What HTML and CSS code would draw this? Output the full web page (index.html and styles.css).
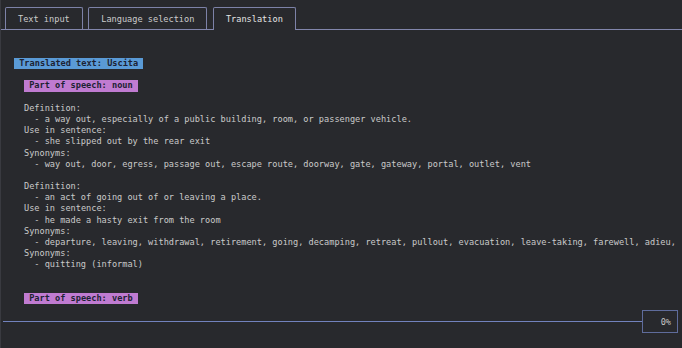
FILE: index.html
```html
<!DOCTYPE html>
<html>
<head>
<meta charset="utf-8">
<link rel="stylesheet" href="styles.css">
</head>
<body>
<div class="app">
  <div class="tabs">
    <div class="tab">Text input</div>
    <div class="tab">Language selection</div>
    <div class="tab active">Translation</div>
  </div>
  <div class="content">
    <div class="row"><span class="badge blue">Translated text: Uscita</span></div>
    <div class="row"></div>
    <div class="pos">
      <div class="row"><span class="badge purple">Part of speech: noun</span></div>
      <div class="row"></div>
      <div class="row">Definition:</div>
      <div class="row item">- a way out, especially of a public building, room, or passenger vehicle.</div>
      <div class="row">Use in sentence:</div>
      <div class="row item">- she slipped out by the rear exit</div>
      <div class="row">Synonyms:</div>
      <div class="row item">- way out, door, egress, passage out, escape route, doorway, gate, gateway, portal, outlet, vent</div>
      <div class="row"></div>
      <div class="row">Definition:</div>
      <div class="row item">- an act of going out of or leaving a place.</div>
      <div class="row">Use in sentence:</div>
      <div class="row item">- he made a hasty exit from the room</div>
      <div class="row">Synonyms:</div>
      <div class="row item">- departure, leaving, withdrawal, retirement, going, decamping, retreat, pullout, evacuation, leave-taking, farewell, adieu,</div>
      <div class="row">Synonyms:</div>
      <div class="row item">- quitting (informal)</div>
      <div class="row"></div>
      <div class="row"></div>
      <div class="row"><span class="badge purple">Part of speech: verb</span></div>
    </div>
  </div>
  <div class="footer">
    <div class="bar"></div>
    <div class="pct">0%</div>
  </div>
</div>
</body>
</html>
```
FILE: styles.css
```css
html, body {
  margin: 0;
  padding: 0;
  background: #28292d;
}
.app {
  width: 682px;
  height: 348px;
  display: flex;
  flex-direction: column;
  font-family: "DejaVu Sans Mono", "Liberation Mono", monospace;
  font-size: 8.6px;
  color: #cacaca;
  overflow: hidden;
  border-left: 1px solid #393a40;
  box-sizing: border-box;
}
.tabs {
  display: flex;
  gap: 5.5px;
  padding: 7px 0 0 4px;
  border-bottom: 1px solid #8286ac;
  height: 22px;
  flex: none;
}
.tab {
  height: 21px;
  line-height: 22px;
  padding: 0 12px;
  border: 1px solid #7d82a8;
  border-bottom: none;
  border-radius: 2px 2px 0 0;
  color: #cccccc;
  white-space: pre;
}
.tab.active {
  height: 22px;
  background: #28292d;
  color: #e4e4e4;
  position: relative;
  z-index: 1;
}
.content {
  flex: 1;
  padding: 28px 0 0 13px;
  overflow: hidden;
  line-height: 11.2px;
}
.row {
  height: 11.2px;
  white-space: pre;
}
.pos {
  padding-left: 10px;
}
.item {
  padding-left: 10.3px;
}
.badge {
  display: inline-block;
  height: 11.2px;
  padding: 0 5.2px;
  font-weight: bold;
  color: #1c2233;
}
.badge.blue {
  background: #5a9ad6;
}
.badge.purple {
  background: #c07bd1;
}
.footer {
  flex: none;
  height: 38px;
  display: flex;
  align-items: flex-start;
  padding: 0 4px 0 2px;
}
.bar {
  flex: 1;
  height: 1px;
  margin-top: 11px;
  background: #7282bd;
}
.pct {
  width: 28px;
  height: 21px;
  padding-right: 6px;
  border: 1px solid #5f6c9c;
  text-align: right;
  line-height: 22px;
  color: #c6c6c6;
}
```
